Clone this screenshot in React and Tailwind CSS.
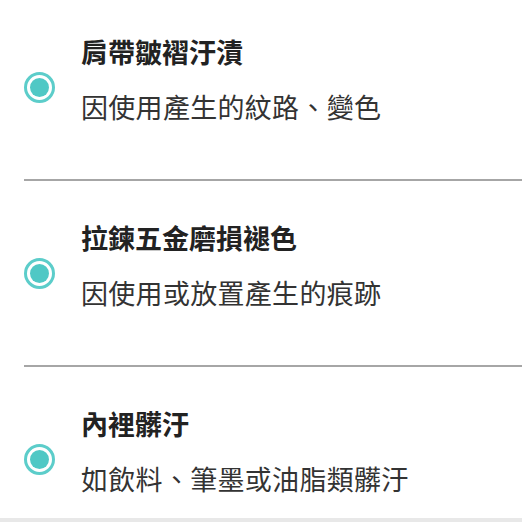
import React from 'react';

const items = [
  { title: '肩帶皺褶汙漬', desc: '因使用產生的紋路、變色' },
  { title: '拉鍊五金磨損褪色', desc: '因使用或放置產生的痕跡' },
  { title: '內裡髒汙', desc: '如飲料、筆墨或油脂類髒汙' },
];

function Radio() {
  return (
    <div className="w-[31px] h-[31px] shrink-0 rounded-full border-[3px] border-[#5ccdca] flex items-center justify-center">
      <div className="w-[19px] h-[19px] rounded-full bg-[#4fc8c5]" />
    </div>
  );
}

function ConditionItem({ title, desc }) {
  return (
    <div>
      <div className="h-[184px] flex items-start pl-[24px]">
        <div className="h-full flex items-center">
          <Radio />
        </div>
        <div className="ml-[26px] mt-[39px] flex flex-col">
          <p className="text-[27px] leading-[36px] font-bold text-[#222]">{title}</p>
          <p className="mt-[19px] text-[27px] leading-[36px] tracking-[0.3px] text-[#333]">{desc}</p>
        </div>
      </div>
      <div className="ml-[24px] h-[2px] bg-[#a6a6a6]" />
    </div>
  );
}

export default function App() {
  return (
    <div
      className="h-[522px] w-full bg-white flex flex-col overflow-hidden"
      style={{ fontFamily: '"Noto Sans CJK TC", "Noto Sans", sans-serif' }}
    >
      <div className="flex-1 overflow-hidden">
        <div className="-mt-[5px]">
          {items.map((item) => (
            <ConditionItem key={item.title} title={item.title} desc={item.desc} />
          ))}
        </div>
      </div>
      <div className="h-[4px] bg-[#e8e8e8]" />
    </div>
  );
}
